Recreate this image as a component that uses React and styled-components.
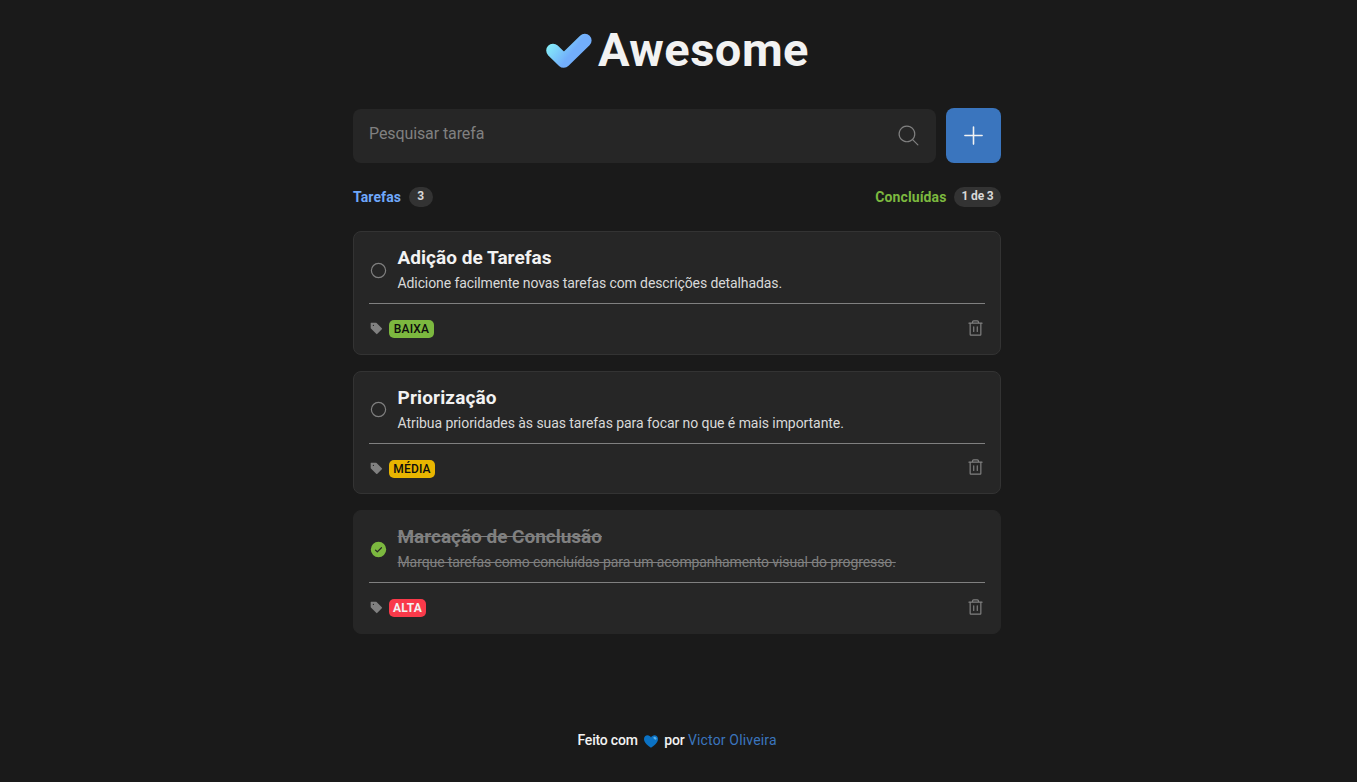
import React from 'react';
import styled, { createGlobalStyle } from 'styled-components';
import {
  PiCircle,
  PiCheckCircleFill,
  PiMagnifyingGlassLight,
  PiPlus,
  PiTagFill,
  PiTrash,
} from 'react-icons/pi';

const GlobalStyle = createGlobalStyle`
  * { box-sizing: border-box; margin: 0; padding: 0; }
  body {
    background: #1a1a1a;
    color: #f2f2f2;
    font-family: Roboto, "Liberation Sans", sans-serif;
  }
  svg { display: block; flex: none; }
  button { border: 0; background: none; cursor: pointer; }
`;

const Page = styled.div`
  width: 648px;
  height: 782px;
  margin-left: 353px;
  display: flex;
  flex-direction: column;
`;

const Header = styled.header`
  height: 108px;
  padding: 21px 0 0 193px;
  display: flex;
  align-items: flex-start;
  gap: 6px;

  svg { margin-top: 12px; }
`;

const Brand = styled.h1`
  font-size: 47px;
  line-height: 58px;
  letter-spacing: 0.5px;
`;

const SearchRow = styled.form`
  display: flex;
  align-items: flex-end;
  gap: 10px;
`;

const SearchBox = styled.label`
  flex: 1;
  height: 54px;
  padding: 0 15.5px 0 16px;
  display: flex;
  align-items: center;
  border-radius: 8px;
  background: #262626;
  color: #808080;

  svg { margin-bottom: 2px; }
`;

const SearchInput = styled.input`
  flex: 1;
  padding-bottom: 4px;
  border: 0;
  outline: 0;
  background: transparent;
  color: #f2f2f2;
  font: 16px/24px Roboto, sans-serif;
  letter-spacing: -0.1px;

  &::placeholder { color: #808080; }
`;

const AddButton = styled.button`
  width: 55px;
  height: 55px;
  display: grid;
  place-items: center;
  border-radius: 8px;
  background: #3a75be;
  color: #f2f2f2;
`;

const Summary = styled.div`
  margin: 24px 0;
  display: flex;
  justify-content: space-between;
`;

const Counter = styled.div`
  height: 20px;
  display: flex;
  align-items: center;
  gap: 7.5px;
  color: ${({ $color }) => $color};
  font-size: 14px;
  font-weight: 700;
  line-height: 20px;
  letter-spacing: 0.1px;
`;

const Count = styled.span`
  height: 20px;
  min-width: 24px;
  padding: 0 7.5px;
  border-radius: 10px;
  background: #333;
  color: #d9d9d9;
  font-size: 12px;
  line-height: 19px;
  letter-spacing: -0.16px;
  text-align: center;
`;

const TaskList = styled.ul`
  display: flex;
  flex-direction: column;
  gap: 16px;
  list-style: none;
`;

const Card = styled.li`
  height: 123.5px;
  padding: 0 15px;
  border: 1px solid ${({ $done }) => ($done ? '#262626' : '#333')};
  border-radius: 8px;
  background: #262626;
`;

const TaskMain = styled.div`
  height: 72px;
  padding: 13px 0 0 0;
  display: flex;
  align-items: flex-start;
  gap: 9.5px;
  border-bottom: 1px solid #808080;
`;

const Toggle = styled.button`
  margin: 15.7px 0 0 0;
  color: ${({ $done }) => ($done ? '#7cb83f' : '#808080')};
`;

const Title = styled.h2`
  color: ${({ $done }) => ($done ? '#808080' : '#f2f2f2')};
  font-size: 19px;
  line-height: 26px;
  letter-spacing: ${({ $spacing }) => $spacing}px;
  text-decoration: ${({ $done }) => ($done ? 'line-through' : 'none')};
`;

const Description = styled.p`
  color: ${({ $done }) => ($done ? '#808080' : '#d9d9d9')};
  font-size: 14px;
  line-height: 25px;
  letter-spacing: ${({ $spacing }) => $spacing}px;
  text-decoration: ${({ $done }) => ($done ? 'line-through' : 'none')};
`;

const TaskFooter = styled.div`
  height: 50.1px;
  display: flex;
  align-items: center;
  color: #808080;

  svg { margin-bottom: 2px; }
`;

const Priority = styled.span`
  width: ${({ $width }) => $width}px;
  height: 18px;
  margin: 0 auto 0 6.5px;
  border-radius: 5px;
  background: ${({ $color }) => $color};
  color: ${({ $light }) => ($light ? '#f2f2f2' : '#0d0d0d')};
  font-size: 12px;
  font-weight: ${({ $light }) => ($light ? 700 : 500)};
  line-height: 18px;
  letter-spacing: 0.2px;
  text-align: center;
`;

const Footer = styled.footer`
  margin: auto 0 30px;
  padding-left: 224.5px;
  display: flex;
  align-items: center;
  font-size: 14px;
  font-weight: 500;
  line-height: 24px;
  letter-spacing: -0.2px;
`;

const Heart = styled.svg`
  margin: 2px 6.5px 0 6px;
`;

const AuthorLink = styled.a`
  margin-left: 3.5px;
  color: #3a75be;
  font-weight: 400;
  letter-spacing: 0.17px;
`;

const tasks = [
  {
    title: 'Adição de Tarefas',
    text: 'Adicione facilmente novas tarefas com descrições detalhadas.',
    priority: 'BAIXA', color: '#7cb83f', width: 45, spacing: 0.03, textSpacing: -0.1,
  },
  {
    title: 'Priorização',
    text: 'Atribua prioridades às suas tarefas para focar no que é mais importante.',
    priority: 'MÉDIA', color: '#e8b500', width: 46, spacing: 0.15, textSpacing: -0.065,
  },
  {
    title: 'Marcação de Conclusão',
    text: 'Marque tarefas como concluídas para um acompanhamento visual do progresso.',
    priority: 'ALTA', color: '#f93a4a', width: 37, spacing: -0.02, textSpacing: -0.1, done: true,
  },
];

function Task({ title, text, priority, color, width, spacing, textSpacing, done }) {
  return (
    <Card $done={done}>
      <TaskMain>
        <Toggle $done={done} aria-label="Concluir">
          {done ? <PiCheckCircleFill size={19} /> : <PiCircle size={19} />}
        </Toggle>
        <div>
          <Title $done={done} $spacing={spacing}>{title}</Title>
          <Description $done={done} $spacing={textSpacing}>{text}</Description>
        </div>
      </TaskMain>
      <TaskFooter>
        <PiTagFill size={13.5} />
        <Priority $color={color} $width={width} $light={done}>{priority}</Priority>
        <PiTrash size={19} />
      </TaskFooter>
    </Card>
  );
}

export default function App() {
  return (
    <>
      <GlobalStyle />
      <Page>
        <Header>
          <svg width="46" height="36" viewBox="0 0 46 36">
            <defs>
              <linearGradient id="check" gradientUnits="userSpaceOnUse" x1="1" y1="12" x2="20" y2="27">
                <stop offset="0" stopColor="#86f0f8" />
                <stop offset="1" stopColor="#72aefb" />
              </linearGradient>
            </defs>
            <path d="M7 17.5 17.8 28 38.8 7.5" fill="none" stroke="url(#check)" strokeWidth="13.6" strokeLinecap="round" strokeLinejoin="round" />
          </svg>
          <Brand>Awesome</Brand>
        </Header>
        <SearchRow>
          <SearchBox>
            <SearchInput placeholder="Pesquisar tarefa" />
            <PiMagnifyingGlassLight size={25} />
          </SearchBox>
          <AddButton type="button" aria-label="Adicionar">
            <PiPlus size={25} />
          </AddButton>
        </SearchRow>
        <Summary>
          <Counter $color="#6fa8fb">Tarefas<Count>3</Count></Counter>
          <Counter $color="#7cb83f">Concluídas<Count>1 de 3</Count></Counter>
        </Summary>
        <TaskList>
          {tasks.map((task) => <Task key={task.title} {...task} />)}
        </TaskList>
        <Footer>
          Feito com
          <Heart width="14" height="13" viewBox="0 0 14 13">
            <path d="M7 12.7C4.5 11 0 7.8 0 4 0 1.7 1.6.3 3.5.3 5 .3 6.4 1.2 7 2.6 7.6 1.2 9 .3 10.5.3 12.4.3 14 1.7 14 4 14 7.8 9.5 11 7 12.7Z" fill="#0b72c4" />
            <ellipse cx="11" cy="3.2" rx="1.8" ry="1.2" transform="rotate(40 11 3.2)" fill="#5aaee8" />
          </Heart>
          por
          <AuthorLink>Victor Oliveira</AuthorLink>
        </Footer>
      </Page>
    </>
  );
}
